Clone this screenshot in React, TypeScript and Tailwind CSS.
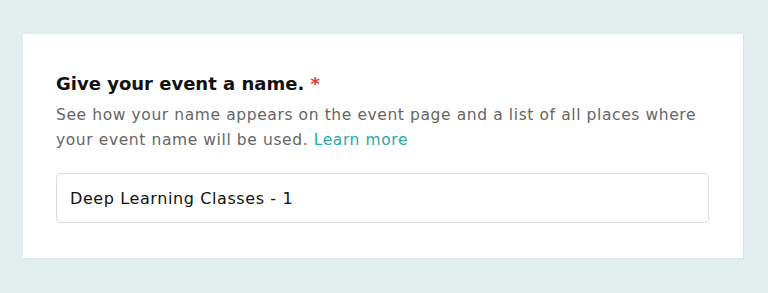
export default function App() {
  return (
    <div className="min-h-[293px] w-full bg-[#e1eeee] pt-[34px] pl-[23px] font-['DejaVu_Sans',sans-serif]">
      <div className="w-[721px] bg-white border-r border-b border-[#d6e3e3] px-[33px] pt-[36px] pb-[35px]">
        <h2 className="text-[18px] leading-[27px] font-semibold text-[#111]">
          Give your event a name. <span className="text-[#e53935]">*</span>
        </h2>
        <p className="mt-[6px] text-[15.5px] leading-[25px] tracking-[0.6px] text-[#666]">
          See how your name appears on the event page and a list of all places where
          <br />
          your event name will be used.{" "}
          <a href="#" className="font-medium text-[#2aa8a4]">
            Learn more
          </a>
        </p>
        <input
          defaultValue="Deep Learning Classes - 1"
          className="mt-[20px] block h-[50px] w-[653px] rounded-[4px] border border-[#dcdcdc] px-[13px] text-[16px] tracking-[0.6px] text-[#111] outline-none"
        />
      </div>
    </div>
  );
}
